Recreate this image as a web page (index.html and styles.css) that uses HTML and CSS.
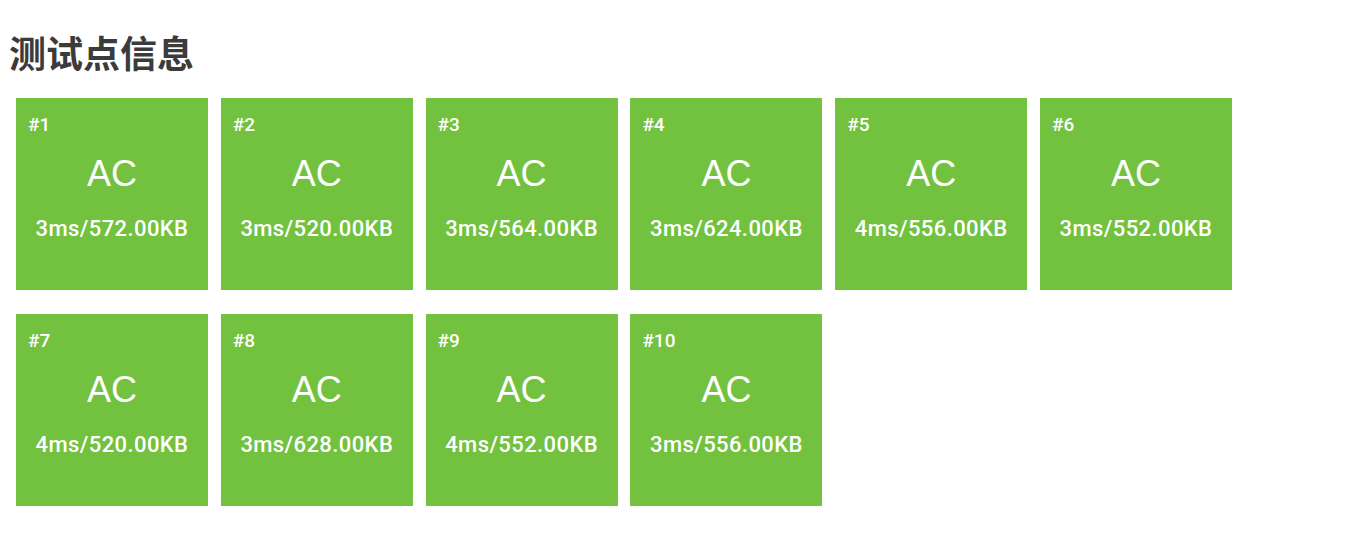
FILE: index.html
```html
<!DOCTYPE html>
<html lang="zh-CN">
<head>
  <meta charset="UTF-8">
  <title>测试点信息</title>
  <link rel="stylesheet" href="styles.css">
</head>
<body>

  <h2 class="title">测试点信息</h2>

  <div class="cases">
    <div class="case"><div class="case-id">#1</div><div class="case-status">AC</div><div class="case-stats">3ms/572.00KB</div></div>
    <div class="case"><div class="case-id">#2</div><div class="case-status">AC</div><div class="case-stats">3ms/520.00KB</div></div>
    <div class="case"><div class="case-id">#3</div><div class="case-status">AC</div><div class="case-stats">3ms/564.00KB</div></div>
    <div class="case"><div class="case-id">#4</div><div class="case-status">AC</div><div class="case-stats">3ms/624.00KB</div></div>
    <div class="case"><div class="case-id">#5</div><div class="case-status">AC</div><div class="case-stats">4ms/556.00KB</div></div>
    <div class="case"><div class="case-id">#6</div><div class="case-status">AC</div><div class="case-stats">3ms/552.00KB</div></div>
    <div class="case"><div class="case-id">#7</div><div class="case-status">AC</div><div class="case-stats">4ms/520.00KB</div></div>
    <div class="case"><div class="case-id">#8</div><div class="case-status">AC</div><div class="case-stats">3ms/628.00KB</div></div>
    <div class="case"><div class="case-id">#9</div><div class="case-status">AC</div><div class="case-stats">4ms/552.00KB</div></div>
    <div class="case"><div class="case-id">#10</div><div class="case-status">AC</div><div class="case-stats">3ms/556.00KB</div></div>
  </div>

</body>
</html>
```

FILE: styles.css
```css
body { margin: 0; font-family: "Liberation Sans", "Noto Sans CJK SC", sans-serif; background: #fff; }
.title { font-family: "Noto Sans CJK SC", sans-serif; font-size: 37px; font-weight: bold; line-height: 50px; color: #3b3b3b; margin: 27px 0 21px 9px; }
.cases { display: flex; flex-wrap: wrap; gap: 24px 12.8px; padding-left: 16px; }
.case { width: 192px; height: 192px; box-sizing: border-box; padding: 17px 12px 0; background: #72c13f; color: #fff; }
.case-id { font-family: Roboto, sans-serif; font-size: 19px; font-weight: 500; line-height: 20px; }
.case-status { margin-top: 21px; font-size: 36px; line-height: 36px; text-align: center; }
.case-stats { margin-top: 27px; font-family: Roboto, "Liberation Sans", sans-serif; font-size: 22px; font-weight: 500; line-height: 20px; letter-spacing: 0.4px; text-align: center; }
```
